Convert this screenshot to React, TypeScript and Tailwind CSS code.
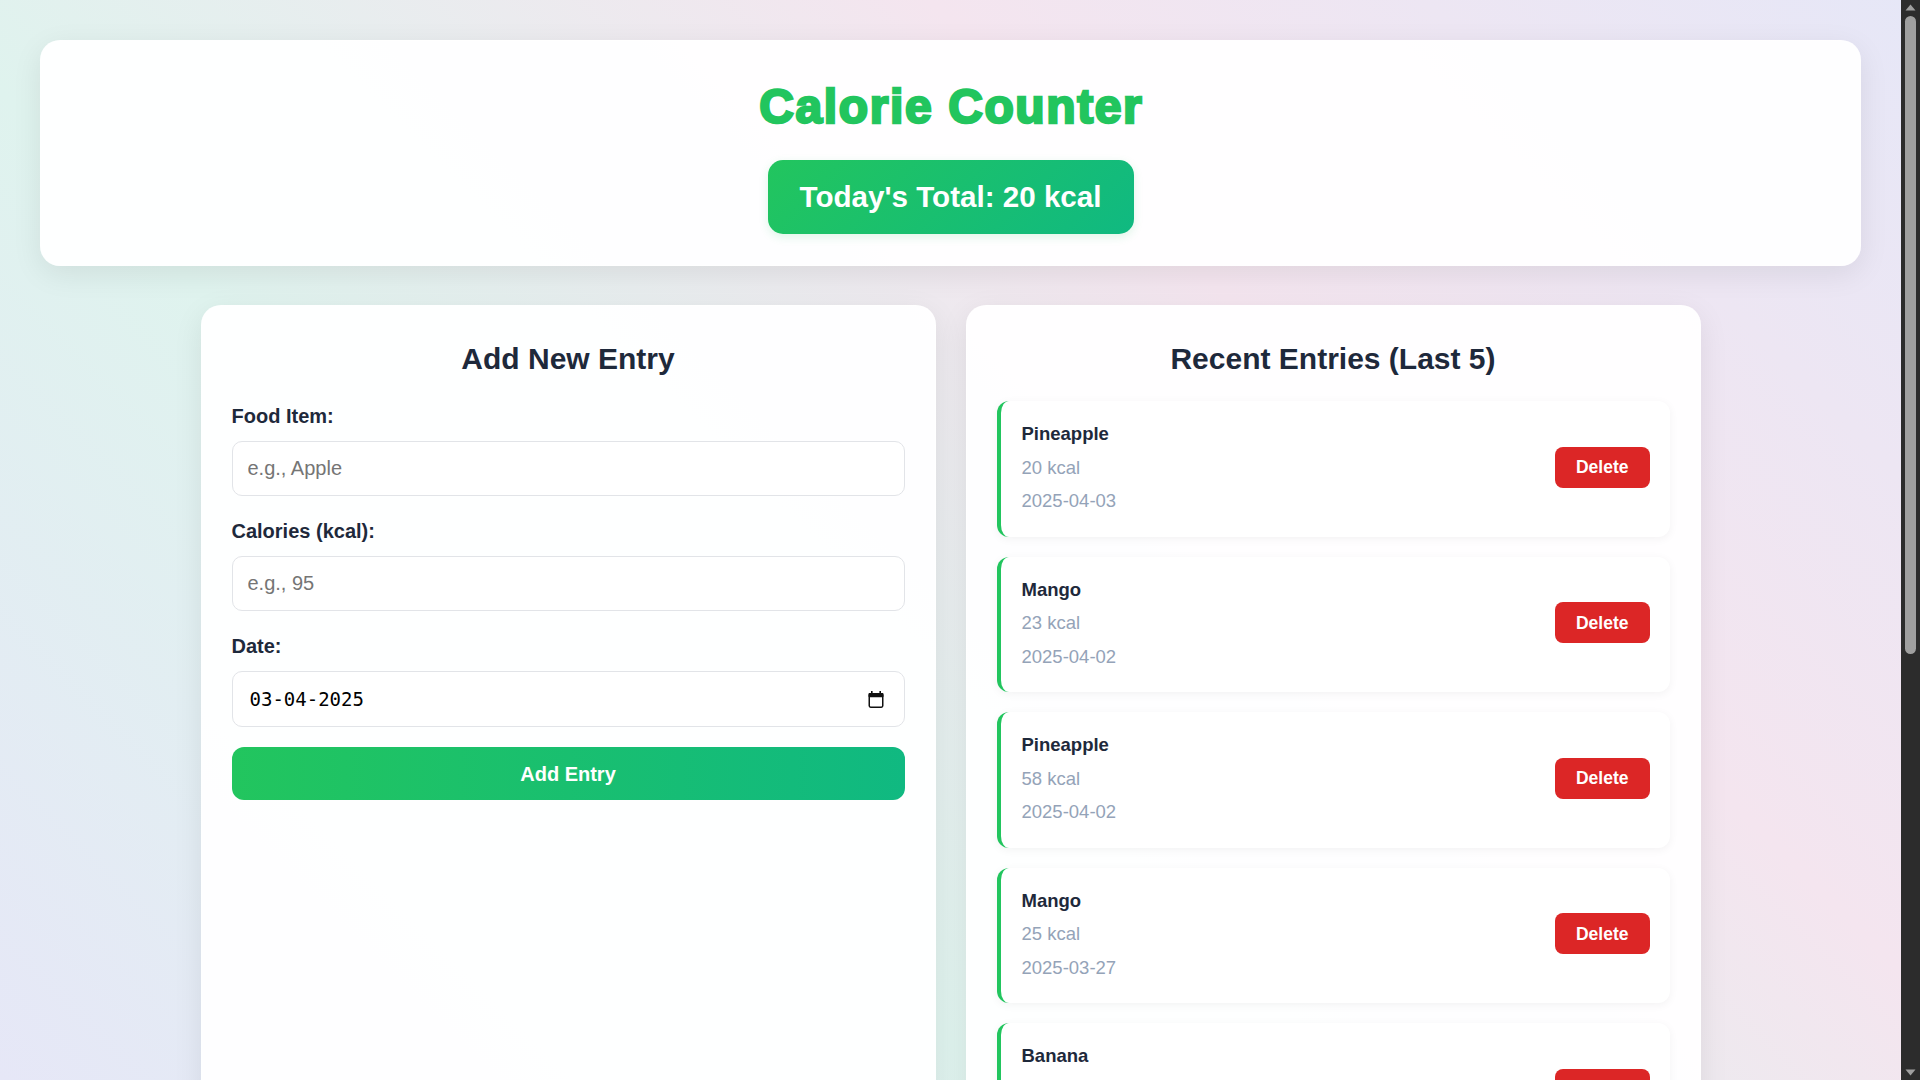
import { useState } from "react";

type Entry = {
  id: number;
  name: string;
  calories: number;
  date: string;
};

const initialEntries: Entry[] = [
  { id: 1, name: "Pineapple", calories: 20, date: "2025-04-03" },
  { id: 2, name: "Mango", calories: 23, date: "2025-04-02" },
  { id: 3, name: "Pineapple", calories: 58, date: "2025-04-02" },
  { id: 4, name: "Mango", calories: 25, date: "2025-03-27" },
  { id: 5, name: "Banana", calories: 105, date: "2025-03-26" },
];

function CalendarIcon() {
  return (
    <svg width="16" height="17" viewBox="0 0 16 17" fill="none" aria-hidden="true">
      <rect x="3" y="0" width="1.6" height="3" fill="#111" />
      <rect x="11.4" y="0" width="1.6" height="3" fill="#111" />
      <rect x="0.5" y="2" width="15" height="4.2" rx="1" fill="#111" />
      <rect x="1.25" y="2.75" width="13.5" height="13.5" rx="1.4" stroke="#111" strokeWidth="1.5" />
    </svg>
  );
}

// the page scrollbar as it shows in the screenshot
function Scrollbar() {
  return (
    <div className="fixed top-0 right-0 flex h-screen w-[19px] flex-col items-center bg-[#2c2c2c]">
      <svg className="mt-[4px]" width="11" height="7" viewBox="0 0 11 7" aria-hidden="true">
        <path d="M5.5 0.5 L10.5 6.5 H0.5 Z" fill="#9f9f9f" />
      </svg>
      <div className="mt-[5px] h-[638px] w-[11px] rounded-full bg-[#9f9f9f]" />
      <svg className="mt-auto mb-[4px]" width="11" height="7" viewBox="0 0 11 7" aria-hidden="true">
        <path d="M5.5 6.5 L10.5 0.5 H0.5 Z" fill="#9f9f9f" />
      </svg>
    </div>
  );
}

export default function App() {
  const [entries, setEntries] = useState<Entry[]>(initialEntries);
  const [food, setFood] = useState("");
  const [calories, setCalories] = useState("");

  const todayTotal = entries
    .filter((e) => e.date === "2025-04-03")
    .reduce((sum, e) => sum + e.calories, 0);

  return (
    <>
      <div className="mr-[19px] min-h-[1780px] bg-[linear-gradient(45deg,#e6e7f7_0%,#dff3ee_33%,#f4e5ef_67%,#e6e7f7_100%)] bg-fixed p-10 font-['Liberation_Sans',Arial,sans-serif] text-[#1e293b]">
        {/* header */}
        <header className="flex flex-col items-center rounded-[20px] border border-white/30 bg-white/95 pt-[36px] pb-[31px] shadow-[0_8px_30px_rgba(0,0,0,0.08)]">
          <h1 className="pl-[1.6px] text-[48px] leading-[60px] font-extrabold tracking-[1.6px] text-[#22c55e] [-webkit-text-stroke:2.5px_#22c55e]">
            Calorie Counter
          </h1>
          <div className="mt-[23px] rounded-[15px] bg-[linear-gradient(135deg,#22c55e,#10b981)] px-8 py-4 text-[29.6px] leading-[42px] font-bold text-white shadow-[0_3px_10px_rgba(34,197,94,0.15)]">
            Today's Total: {todayTotal} kcal
          </div>
        </header>

        <main className="mx-auto mt-[39px] grid max-w-[1500px] grid-cols-2 gap-[30px]">
          {/* add entry form */}
          <section className="rounded-[20px] border border-white/30 bg-white/95 p-[30px] shadow-[0_8px_30px_rgba(0,0,0,0.08)]">
            <h2 className="mb-5 text-center text-[30px] leading-[45px] font-bold">Add New Entry</h2>

            <div className="mb-5">
              <label className="mb-[10px] block text-[20px] leading-[30px] font-bold">Food Item:</label>
              <input
                type="text"
                value={food}
                onChange={(e) => setFood(e.target.value)}
                placeholder="e.g., Apple"
                className="block h-[55px] w-full rounded-[10px] border border-[#e2e4e8] bg-white px-[15px] text-[20px] text-[#1e293b] outline-none placeholder:text-[#757575]"
              />
            </div>

            <div className="mb-5">
              <label className="mb-[10px] block text-[20px] leading-[30px] font-bold">Calories (kcal):</label>
              <input
                type="text"
                value={calories}
                onChange={(e) => setCalories(e.target.value)}
                placeholder="e.g., 95"
                className="block h-[55px] w-full rounded-[10px] border border-[#e2e4e8] bg-white px-[15px] text-[20px] text-[#1e293b] outline-none placeholder:text-[#757575]"
              />
            </div>

            <div className="mb-5">
              <label className="mb-[10px] block text-[20px] leading-[30px] font-bold">Date:</label>
              <div className="flex h-[56px] w-full items-center rounded-[10px] border border-[#e2e4e8] bg-white pr-[20px] pl-[17px]">
                <input
                  type="text"
                  readOnly
                  value="03-04-2025"
                  className="min-w-0 flex-1 bg-transparent font-['DejaVu_Sans_Mono',monospace] text-[19px] text-black outline-none"
                />
                <CalendarIcon />
              </div>
            </div>

            <button
              type="button"
              onClick={() => {
                const n = Number(calories);
                if (!food || !n) return;
                setEntries([{ id: Date.now(), name: food, calories: n, date: "2025-04-03" }, ...entries].slice(0, 5));
                setFood("");
                setCalories("");
              }}
              className="h-[53px] w-full rounded-[12px] bg-[linear-gradient(90deg,#22c55e,#10b981)] text-[20px] font-bold text-white"
            >
              Add Entry
            </button>
          </section>

          {/* recent entries */}
          <section className="rounded-[20px] border border-white/30 bg-white/95 p-[30px] shadow-[0_8px_30px_rgba(0,0,0,0.08)]">
            <h2 className="mb-5 text-center text-[30px] leading-[45px] font-bold">Recent Entries (Last 5)</h2>

            <div className="flex flex-col gap-5">
              {entries.map((entry) => (
                <div
                  key={entry.id}
                  className="flex items-center justify-between rounded-[12px] border-l-4 border-[#22c55e] bg-white pt-[16px] pr-5 pb-[19px] pl-[21px] shadow-[0_2px_10px_rgba(0,0,0,0.05)]"
                >
                  <div className="flex flex-col text-[18.5px] leading-[33.5px]">
                    <span className="font-bold text-[#1e293b]">{entry.name}</span>
                    <span className="text-[#94a3b8]">{entry.calories} kcal</span>
                    <span className="text-[#94a3b8]">{entry.date}</span>
                  </div>
                  <button
                    type="button"
                    onClick={() => setEntries(entries.filter((e) => e.id !== entry.id))}
                    className="h-[41px] rounded-[8px] bg-[#dc2626] px-[21px] text-[17.5px] font-bold text-white"
                  >
                    Delete
                  </button>
                </div>
              ))}
            </div>
          </section>
        </main>
      </div>
      <Scrollbar />
    </>
  );
}
